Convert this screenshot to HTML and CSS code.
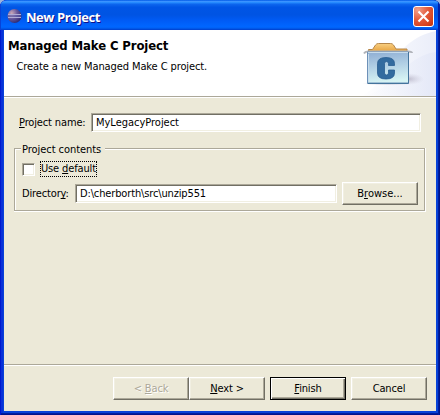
FILE: index.html
```html
<!DOCTYPE html>
<html lang="en">
<head>
<meta charset="utf-8">
<title>New Project</title>
<link rel="stylesheet" href="styles.css">
</head>
<body>
<div class="window">
  <header class="titlebar">
    <svg class="app-icon" width="16" height="16" viewBox="0 0 16 16">
      <defs><radialGradient id="orb" cx=".3" cy=".3" r=".8"><stop offset="0" stop-color="#c9a9b8"/><stop offset=".5" stop-color="#66589c"/><stop offset="1" stop-color="#29256f"/></radialGradient></defs>
      <circle cx="7.500" cy="8" r="7" fill="url(#orb)"/>
      <path d="M1 6.500h13M1 9.500h13" stroke="#b0acd6"/><path d="M1 8h13" stroke="#5b5ca8"/>
    </svg>
    <span class="caption">New Project</span>
    <button class="close" aria-label="Close"><svg width="19" height="19" viewBox="0 0 19 19"><path d="M4.500 4.500l10 10M14.500 4.500l-10 10" stroke="#fff" stroke-width="2.100"/></svg></button>
  </header>
  <main class="client">
    <section class="banner">
      <div class="banner-text">
        <h1>Managed Make C Project</h1>
        <p>Create a new Managed Make C project.</p>
      </div>
      <svg class="banner-art" width="76" height="66" viewBox="0 0 76 66">
        <defs>
          <linearGradient id="sweep" x1="0" y1="0" x2="1" y2="0"><stop offset="0" stop-color="#fff"/><stop offset="1" stop-color="#dfe4f6"/></linearGradient>
          <linearGradient id="box" x1="0" y1="0" x2=".15" y2="1"><stop offset="0" stop-color="#8eadd3"/><stop offset=".5" stop-color="#b2d0e5"/><stop offset="1" stop-color="#d6f3f3"/></linearGradient>
          <linearGradient id="folder" x1="0" y1="0" x2="0" y2="1"><stop offset="0" stop-color="#f8cf82"/><stop offset="1" stop-color="#e6a03b"/></linearGradient>
          <radialGradient id="shade"><stop offset="0" stop-color="#a9a5b8" stop-opacity=".7"/><stop offset="1" stop-color="#c8c5d8" stop-opacity="0"/></radialGradient>
        </defs>
        <path d="M0 66C28 58 30 10 76 1V66Z" fill="url(#sweep)" opacity=".65"/>
        <path d="M0 66C36 62 42 26 76 22V66Z" fill="url(#sweep)" opacity=".6"/>
        <ellipse cx="48" cy="49" rx="16" ry="6" fill="url(#shade)"/>
        <ellipse cx="27" cy="53.500" rx="25" ry="2" fill="url(#shade)"/>
        <path d="M8.500 22v-2.500h4l3-4.500q1-1.500 3-1.500h12q2 0 3 1.500l2.500 4h11V22z" fill="url(#folder)" stroke="#b5864a"/>
        <path d="M4 23.500q1-2 4-2h40q4 0 4 1.500" fill="none" stroke="#b0b3b9" stroke-width="2"/>
        <path d="M7.500 22h41v31h-41z" fill="url(#box)" stroke="#6d91b8"/>
        <path d="M8 22.500h40M8.500 24v28" stroke="#c7dcec"/>
        <path d="M48.500 22v31.500h-41" fill="none" stroke="#44749c"/>
        <path d="M34.500 35.500V33.500q0-6-8.500-6T17.500 33.500v9.500q0 6 8.500 6t8.500-6v-3h-6V43q0 2-2 2T24.500 43V33.500q0-2 2-2t2 2v2z" fill="#336b9f" stroke="#285d91" stroke-width=".8"/>
      </svg>
    </section>
    <section class="form">
      <div class="name-row">
        <label><u>P</u>roject name:</label>
        <div class="field grow">MyLegacyProject</div>
      </div>
      <div class="group">
        <div class="group-title">Project contents</div>
        <div class="check-row"><span class="checkbox"></span><span class="focus">Use <u>d</u>efault</span></div>
        <div class="dir-row">
          <label>Director<u>y</u>:</label>
          <div class="field dir">D:\cherborth\src\unzip551</div>
          <button class="btn browse">B<u>r</u>owse...</button>
        </div>
      </div>
    </section>
    <footer class="actions">
      <button class="btn disabled">&lt; <u>B</u>ack</button>
      <button class="btn"><u>N</u>ext &gt;</button>
      <button class="btn default"><u>F</u>inish</button>
      <button class="btn">Cancel</button>
    </footer>
  </main>
</div>
</body>
</html>
```
FILE: styles.css
```css
* { box-sizing: border-box; }
body { margin: 0; background: #9bb3dc; font: 11px/13px "DejaVu Sans Condensed", "DejaVu Sans", sans-serif; font-stretch: condensed; letter-spacing: -.14px; color: #000; overflow: hidden; white-space: nowrap; }
u { text-decoration: underline; text-underline-offset: 1px; text-decoration-thickness: 1px; text-decoration-skip-ink: none; }
.window { width: 440px; height: 415px; border-radius: 7px 7px 0 0; overflow: hidden; padding: 0 4px 4px; background: #0842d8; display: flex; flex-direction: column; box-shadow: inset 1px 0 #0019cf, inset -1px 0 #00138c, inset -2px 0 #001ea0, inset 0 -1px #00138c, inset 0 -2px #001ea0, inset 3px 0 #0831d9; }
.titlebar { height: 30px; flex: none; margin: 0 -4px; padding: 3px 6px 0 7px; display: flex; align-items: center; background: linear-gradient(#0058e6 0, #3a93ff 5%, #288eff 8%, #0d66ee 14%, #0055e5 24%, #0054e3 50%, #005bf5 68%, #0066ff 88%, #0062f5 93%, #003dcb 100%); box-shadow: inset 1px 0 #0842d8, inset -2px 0 #001fa8; }
.app-icon { margin-top: -1px; }
.caption { font: bold 13px/18px "Open Sans", "Noto Sans", sans-serif; color: #fff; text-shadow: 1px 1px #0f1089; margin-left: 3px; flex: 1; letter-spacing: -.45px; }
.close { width: 21px; height: 21px; padding: 0; border: 1px solid #fff; border-radius: 3px; background: radial-gradient(circle at 20% 15%, #f0a08b, #e35b3c 45%, #d5401c 80%, #b92f0c); }
.close svg { display: block; }
.client { flex: 1; background: #ece9d8; display: flex; flex-direction: column; min-height: 0; }
.banner { height: 68px; background: #fff; border-bottom: 1px solid #fff; display: flex; justify-content: space-between; box-shadow: inset 0 -1px #aca899; flex: none; }
.banner-text { padding: 8px 0 0 4px; }
h1 { font: bold 13px/16px "DejaVu Sans Condensed", "DejaVu Sans", sans-serif; font-stretch: condensed; margin: 0; letter-spacing: -.12px; }
p { margin: 6px 0 0 8.5px; letter-spacing: -.1px; }
.banner-art { display: block; }
.form { flex: 1; padding: 15px 10px 0; }
.name-row { display: flex; align-items: center; padding: 0 5px; }
.name-row label { width: 72px; }
.field { height: 19px; border: 1px solid; border-color: #aca899 #fff #fff #aca899; background: #fff; box-shadow: inset 1px 1px #716f64, inset -1px -1px #f1efe2; padding: 2px 0 0 4px; }
.grow { flex: 1; letter-spacing: -.02px; }
.group { margin-top: 16px; height: 63px; width: 411px; border: 1px solid #aca899; box-shadow: inset 1px 1px #fff, 0 1px #fff, 1px 0 #fff, 1px 1px #fff; padding: 0 6px 0 7px; }
.group-title { width: 84px; height: 13px; margin: -6px 0 5px -1px; padding-left: 1px; background: #ece9d8; letter-spacing: -.05px; }
.check-row { display: flex; align-items: center; height: 16px; gap: 5px; }
.checkbox { width: 13px; height: 13px; background: #fff; border: 1px solid; border-color: #aca899 #fff #fff #aca899; box-shadow: inset 1px 1px #716f64, inset -1px -1px #f1efe2; }
.focus { width: 57px; height: 16px; border: 1px dotted #000; line-height: 14px; }
.dir-row { display: flex; align-items: center; margin-top: 5px; }
.dir-row label { width: 53px; }
.dir { width: 262px; }
.btn { font: inherit; letter-spacing: inherit; color: #000; width: 76px; height: 23px; padding: 0; border: 1px solid; border-color: #fff #716f64 #716f64 #fff; background: #ece9d8; box-shadow: inset -1px -1px #aca899, inset 1px 1px #f1efe2; border-radius: 0; }
.browse { margin-left: 5px; letter-spacing: 0; }
.actions { height: 47px; flex: none; display: flex; padding: 12px 9px 0; justify-content: flex-end; border-top: 1px solid #aca899; box-shadow: inset 0 1px #fff; }
.disabled { color: #aca899; text-shadow: 1px 1px #fff; }
.default { margin: 0 5px; border-color: #000; box-shadow: inset 1px 1px #fff, inset -1px -1px #716f64, inset -2px -2px #aca899; }
```
